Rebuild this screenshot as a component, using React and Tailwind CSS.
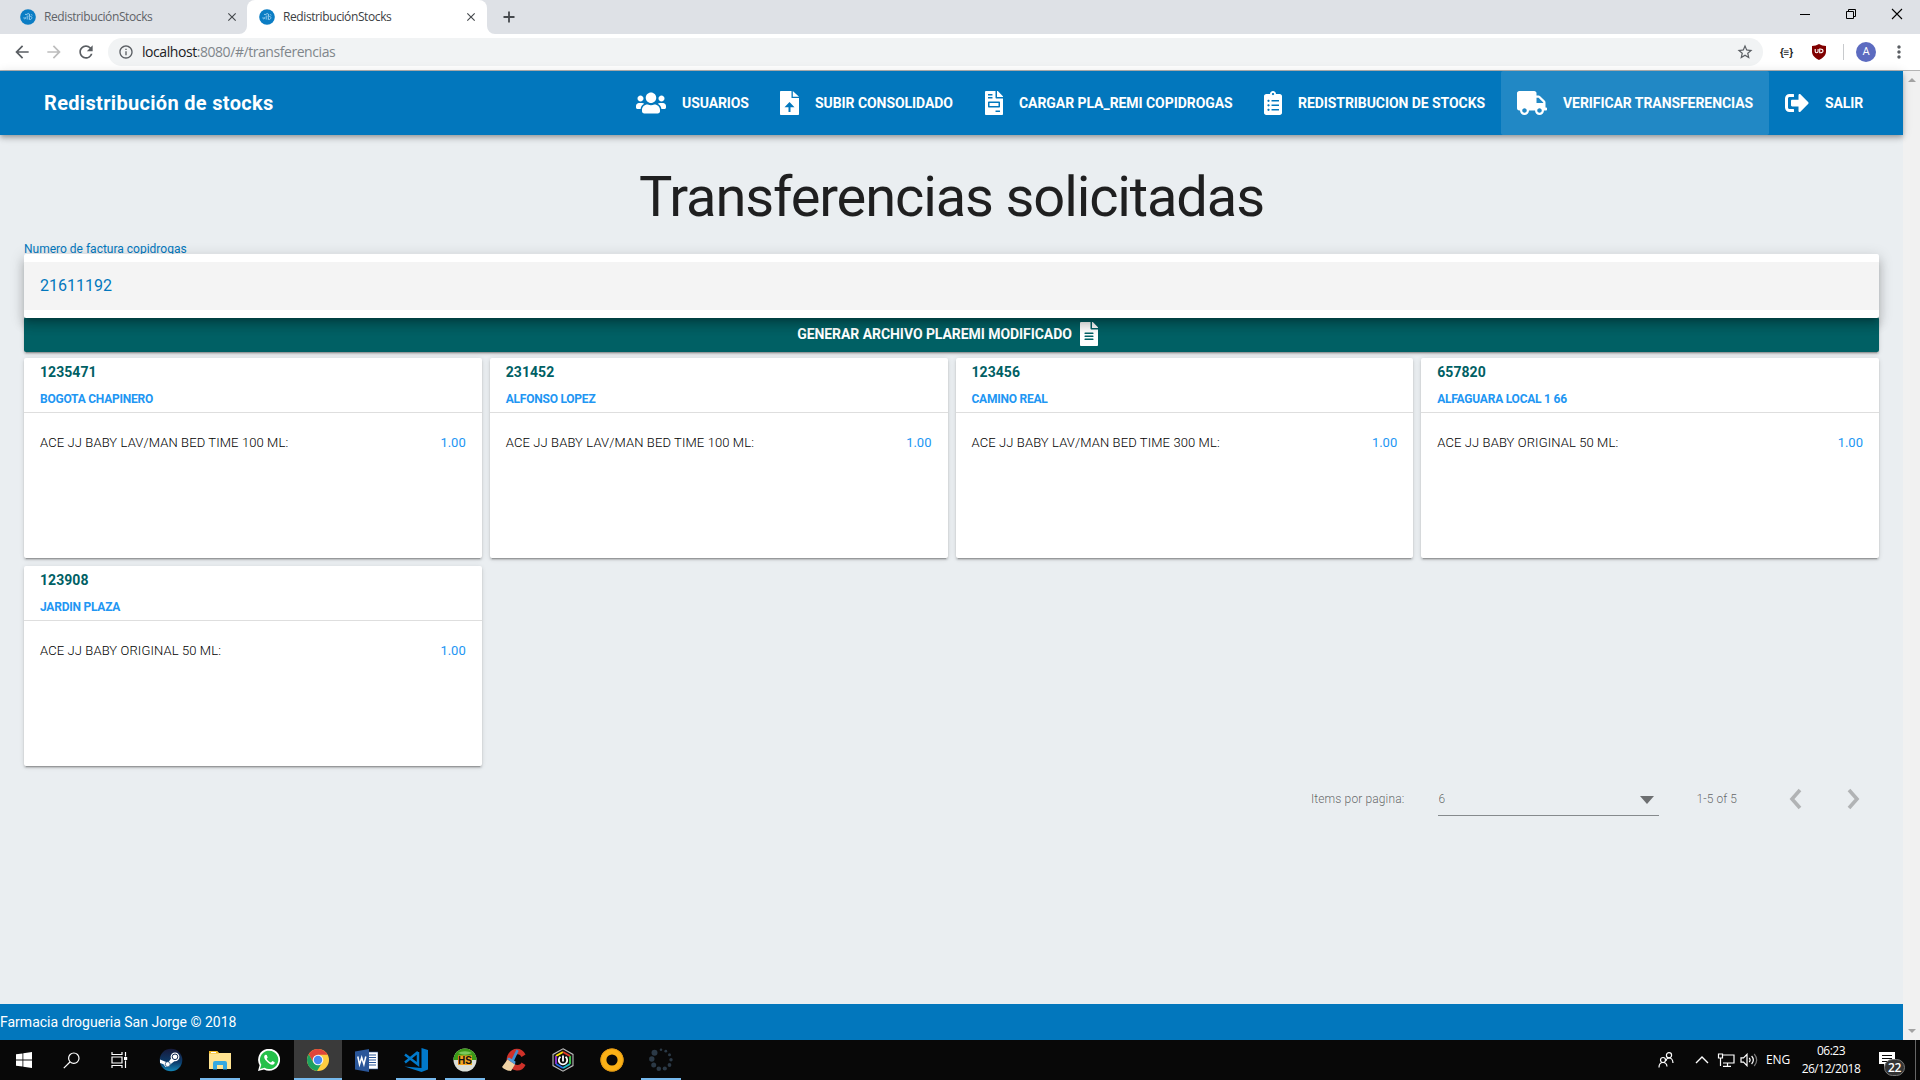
import React from "react";
import {
  FaUsers, FaFileInvoice, FaClipboardList, FaTruck, FaSignOutAlt, FaFileAlt,
} from "react-icons/fa";
import { MdArrowBack, MdArrowForward, MdRefresh, MdInfoOutline, MdStarBorder, MdMoreVert, MdClose } from "react-icons/md";

function Favicon() {
  return (
    <svg width="16" height="16" viewBox="0 0 16 16">
      <circle cx="8" cy="8" r="7.8" fill="#0b7dc4" />
      <path d="M4 8.2c0 2.5 1.6 2.6 1.7 0M5 5.4h2.5M7.2 6.5v4M7.4 4.6c2.2-.8 3 1.8 1.4 2.6M9.3 5v6M9.6 7.8c2-1.3 3 .9 1.6 2.3-.7.7-1.7.3-1.7-.6M11.2 5.6l1.2.6" fill="none" stroke="#9fd3f0" strokeWidth=".9" />
    </svg>
  );
}

function Tab({ active }) {
  return (
    <div className={active
      ? "relative flex h-[34px] w-[240px] items-center rounded-t-lg bg-white pl-3 text-[#3c4043]"
      : "flex h-[34px] w-[247px] items-center pl-5 text-[#5f6368]"}>
      <Favicon />
      <span className="ml-2 w-[181px] text-[12px] tracking-[-0.4px]">RedistribuciónStocks</span>
      <MdClose size={14} color="#45494d" />
      {active && (
        <>
          <svg className="absolute -left-2 bottom-0" width="8" height="8" viewBox="0 0 8 8"><path d="M8 0v8H0a8 8 0 0 0 8-8z" fill="#fff" /></svg>
          <svg className="absolute -right-2 bottom-0" width="8" height="8" viewBox="0 0 8 8"><path d="M0 0v8h8a8 8 0 0 1-8-8z" fill="#fff" /></svg>
        </>
      )}
    </div>
  );
}

function BrowserChrome() {
  return (
    <div className="font-['Open_Sans',sans-serif]">
      <div className="flex h-[34px] items-center bg-[#dee1e6]">
        <Tab />
        <Tab active />
        <svg className="ml-4" width="12" height="12" viewBox="0 0 12 12"><path d="M6 .5v11M.5 6h11" stroke="#45494d" strokeWidth="1.8" /></svg>
        <div className="mb-[6px] ml-auto mr-[17px] flex items-center gap-[34px]">
          <svg width="12" height="12" viewBox="0 0 12 12"><path d="M1 6.5h10" stroke="#000" /></svg>
          <svg width="12" height="12" viewBox="0 0 12 12"><path d="M1.500 3.500h7v7h-7zM3.500 3.500v-2h7v7h-2" fill="none" stroke="#000" /></svg>
          <svg width="12" height="12" viewBox="0 0 12 12"><path d="M1 1l10 10M11 1L1 11" stroke="#000" strokeWidth="1.1" /></svg>
        </div>
      </div>
      <div className="flex h-[36px] items-center bg-white text-[#5a5e63]">
        <div className="flex w-[108px] gap-3 pl-3">
          <MdArrowBack size={20} />
          <MdArrowForward size={20} color="#bdbdbd" />
          <MdRefresh size={20} />
        </div>
        <div className="flex h-[28px] w-[1655px] items-center rounded-full bg-[#f1f3f4] pl-[10px] pr-[9px]">
          <MdInfoOutline size={16} />
          <span className="-mt-px ml-2 text-[14px] tracking-[-0.44px] text-[#80868b]"><span className="text-[#202124]">localhost</span>:8080/#/transferencias</span>
          <MdStarBorder size={18} className="ml-auto" />
        </div>
        <span className="ml-[17px] w-[15px] whitespace-nowrap font-['Liberation_Sans',sans-serif] text-[10px] font-bold tracking-[-0.3px] text-[#222]">{"{≡}"}</span>
        <svg className="ml-[17px]" width="14" height="16" viewBox="0 0 14 16">
          <path d="M7 0c2 1.300 4.500 1.800 7 2v5.500c0 4-3.200 6.700-7 8.500-3.800-1.800-7-4.500-7-8.500V2c2.500-.2 5-.7 7-2z" fill="#800000" />
          <path d="M3.200 5v2.300c0 2 2.900 2 2.900 0V5M7.700 5v3.700c4.400.6 4.400-4.200 0-3.700z" fill="none" stroke="#fff" strokeWidth="1.100" />
        </svg>
        <div className="ml-[17px] h-4 w-px bg-[#c8cacd]" />
        <div className="ml-[12px] flex size-5 items-center justify-center rounded-full bg-[#5c6bc0] font-['Roboto',sans-serif] text-[11px] text-white">A</div>
        <MdMoreVert size={20} className="ml-[13px]" />
      </div>
      <div className="h-px bg-[#b4b4b4]" />
    </div>
  );
}

function FileUpload() {
  return (
    <svg width="19" height="24" viewBox="0 0 19 24" fill="#fff">
      <path fillRule="evenodd" d="M0 .8Q0 0 .8 0H11.500v7H19v16.200q0 .8-.8.800H.8q-.8 0-.8-.8zM9.500 11L4.500 16.200h4V21h2v-4.800h4z" />
      <path d="M12.800 0L19 5.800h-6.200z" />
    </svg>
  );
}

const NAV = [
  { label: "USUARIOS", icon: <FaUsers size={30} />, cls: "w-[144px] tracking-[-0.1px]", iconCls: "w-[30px]" },
  { label: "SUBIR CONSOLIDADO", icon: <FileUpload />, cls: "w-[204px] tracking-[-0.07px]", iconCls: "w-[19px]" },
  { label: "CARGAR PLA_REMI COPIDROGAS", icon: <FaFileInvoice size={24} className="-mx-[3px] shrink-0" />, cls: "w-[279px] tracking-[-0.06px]", iconCls: "w-[19px]" },
  { label: "REDISTRIBUCION DE STOCKS", icon: <FaClipboardList size={24} className="-mx-[3px] shrink-0" />, cls: "w-[254px] tracking-[-0.07px]", iconCls: "w-[19px]" },
  { label: "VERIFICAR TRANSFERENCIAS", icon: <FaTruck size={30} />, cls: "w-[268px] bg-white/[.125] tracking-[-0.07px]", iconCls: "w-[30px]" },
  { label: "SALIR", icon: <FaSignOutAlt size={24} />, cls: "w-[110px] tracking-[-0.1px]", iconCls: "w-[24px]" },
];

function Header() {
  return (
    <header className="relative flex h-16 items-center bg-[#0277bd] pl-11 pr-6 text-white shadow-[0_2px_4px_-1px_rgba(0,0,0,.2),0_4px_5px_0_rgba(0,0,0,.14),0_1px_10px_0_rgba(0,0,0,.12)]">
      <h1 className="mr-auto text-[20px] font-bold tracking-[0.32px]">Redistribución de stocks</h1>
      <nav className="flex h-full">
        {NAV.map((n) => (
          <a key={n.label} className={"flex h-full items-center whitespace-nowrap rounded-[2px] pl-4 text-[14px] font-bold " + n.cls}>
            <span className={"mr-4 flex shrink-0 items-center justify-center " + n.iconCls}>{n.icon}</span>
            {n.label}
          </a>
        ))}
      </nav>
    </header>
  );
}

const CARDS = [
  ["1235471", "BOGOTA CHAPINERO", "ACE JJ BABY LAV/MAN BED TIME 100 ML:"],
  ["231452", "ALFONSO LOPEZ", "ACE JJ BABY LAV/MAN BED TIME 100 ML:"],
  ["123456", "CAMINO REAL", "ACE JJ BABY LAV/MAN BED TIME 300 ML:"],
  ["657820", "ALFAGUARA LOCAL 1 66", "ACE JJ BABY ORIGINAL 50 ML:"],
  ["123908", "JARDIN PLAZA", "ACE JJ BABY ORIGINAL 50 ML:"],
];

function Card({ data }) {
  return (
    <div className="h-[200px] rounded-[2px] bg-white shadow-[0_3px_1px_-2px_rgba(0,0,0,.2),0_2px_2px_0_rgba(0,0,0,.14),0_1px_5px_0_rgba(0,0,0,.12)]">
      <div className="h-[55px] border-b border-[#dedede] px-4 pt-1">
        <div className="text-[14px] font-bold leading-5 tracking-[0.05px] text-[#006064]">{data[0]}</div>
        <div className="mt-[7px] text-[12px] font-bold leading-5 tracking-[-0.23px] text-[#2196f3]">{data[1]}</div>
      </div>
      <div className="flex h-[60px] items-center justify-between px-4 text-[13px]">
        <span className="font-light tracking-[0.11px] text-black">{data[2]}</span>
        <span className="text-[#2196f3]">{"1.00"}</span>
      </div>
    </div>
  );
}

function Page() {
  return (
    <div className="flex w-[1903px] flex-col bg-[#eaeef1] font-['Roboto',sans-serif]">
      <Header />
      <main className="flex grow flex-col px-6">
        <h2 className="mt-[34px] text-center text-[56px] leading-[56px] tracking-[-1.12px] text-black/[.87]">Transferencias solicitadas</h2>
        <div className="mt-[15px] h-[14px] text-[12px] leading-[18px] text-[#0277bd]">Numero de factura copidrogas</div>
        <div className="relative z-10 h-16 rounded-[2px] bg-white py-2 shadow-[0_5px_5px_-3px_rgba(0,0,0,.2),0_8px_10px_1px_rgba(0,0,0,.14),0_3px_14px_2px_rgba(0,0,0,.12)]">
          <div className="flex h-12 items-center bg-[#f4f4f4] px-4 text-[16px] text-[#0277bd]">21611192</div>
        </div>
        <button className="-mt-px flex h-[35px] items-center justify-center rounded-[2px] bg-[#006064] pr-[5px] pb-[1px] text-[14px] font-bold tracking-[-0.06px] text-white shadow-[0_3px_1px_-2px_rgba(0,0,0,.2),0_2px_2px_0_rgba(0,0,0,.14),0_1px_5px_0_rgba(0,0,0,.12)]">
          GENERAR ARCHIVO PLAREMI MODIFICADO
          <FaFileAlt size={24} className="ml-[5px]" />
        </button>
        <section className="mt-[6px] grid grid-cols-4 gap-2">
          {CARDS.map((c) => <Card key={c[0]} data={c} />)}
        </section>
        <div className="mt-[15px] flex h-[36px] items-center text-[12px] font-light text-black/60">
          <span className="ml-auto tracking-[0.13px]">Items por pagina:</span>
          <div className="relative ml-[34px] mr-[37px] flex h-[34px] w-[221px] items-center justify-between border-b border-[#868a8d] pr-[5px] pt-px">
            <span>6</span>
            <svg className="mt-px" width="14" height="8" viewBox="0 0 14 8"><path d="M0 0h14L7 8z" fill="#6d6f71" /></svg>
          </div>
          <span className="tracking-[0.08px]">1-5 of 5</span>
          <svg className="ml-[51px]" width="14" height="22" viewBox="0 0 14 22"><path d="M12 2L4 11l8 9" fill="none" stroke="#b1b3b5" strokeWidth="3.600" /></svg>
          <svg className="ml-[45px] mr-[18px]" width="14" height="22" viewBox="0 0 14 22"><path d="M2 2l8 9-8 9" fill="none" stroke="#b1b3b5" strokeWidth="3.600" /></svg>
        </div>
      </main>
      <footer className="flex h-9 items-center bg-[#0277bd] text-[14px] text-white">Farmacia drogueria San Jorge © 2018</footer>
    </div>
  );
}

function Scrollbar() {
  return (
    <div className="flex w-[17px] flex-col items-center justify-between bg-[#f1f1f1] py-[6px]">
      <svg width="8" height="6" viewBox="0 0 8 6"><path d="M0 5l4-4 4 4z" fill="#a3a3a3" /></svg>
      <svg width="8" height="6" viewBox="0 0 8 6"><path d="M0 1l4 4 4-4z" fill="#a3a3a3" /></svg>
    </div>
  );
}

const line = { fill: "none", stroke: "#fff", strokeWidth: 1.2 };

const START = [
  <svg width="16" height="16" viewBox="0 0 16 16" fill="#fff"><path d="M0 2.300L6.500 1.400v6.200H0zM7.300 1.300L16 0v7.600H7.300zM0 8.400h6.500v6.200L0 13.700zM7.300 8.400H16V16l-8.700-1.300z" /></svg>,
  <svg className="-ml-px" width="17" height="17" viewBox="0 0 17 17" {...line}><circle cx="10.800" cy="6.200" r="5.200" /><path d="M7 10L.8 16.200" /></svg>,
  <svg className="-ml-px" width="17" height="16" viewBox="0 0 17 16" {...line}><path d="M1 0v2.500h10V0M1 16v-2.500h10V16M1 5h10v6H1zM14.500 0v4.500M14.500 8.500V16" /><path d="M13 5h3.200v3H13z" fill="#fff" stroke="none" /></svg>,
];

const APPS = [
  { icon: (
    <svg width="24" height="24" viewBox="0 0 24 24">
      <defs><linearGradient id="steam" x1="0" y1="0" x2="0" y2="1"><stop offset="0" stopColor="#171a3b" /><stop offset=".6" stopColor="#0c3c6b" /><stop offset="1" stopColor="#1387b8" /></linearGradient></defs>
      <circle cx="12" cy="12" r="11.300" fill="url(#steam)" />
      <path d="M1 11.500l8 3.300 4-5.500L17 12l-5.500 4.200-2 2.600-3 .2-2-2.700L1 15z" fill="#fff" />
      <circle cx="16" cy="8.800" r="4.400" fill="#fff" /><circle cx="16" cy="8.800" r="2.800" fill="none" stroke="#10284f" strokeWidth="1" />
      <circle cx="8.700" cy="16.200" r="2.500" fill="#fff" stroke="#10416f" strokeWidth=".7" />
    </svg>) },
  { bar: "w-10", icon: (
    <svg width="22" height="19" viewBox="0 0 22 19">
      <path d="M0 0h8l2 2h12v16H0z" fill="#ffe391" /><path d="M0 0h8l2 2.500H0z" fill="#f5b921" /><path d="M2 1h5v1H2z" fill="#fff" />
      <path d="M4 18.500V12q0-2 2-2h10q2 0 2 2v6.500h-4V14H8v4.500z" fill="#35a9e1" />
    </svg>) },
  { icon: (
    <svg width="22" height="22" viewBox="0 0 22 22">
      <path d="M0 22l1.600-5.700A11 11 0 1 1 6 20.500z" fill="#fff" />
      <path d="M2 20l1.300-4.300A9.200 9.200 0 1 1 6.500 18.800z" fill="#25c04a" />
      <path d="M7.700 5.800c-2 .7-2.100 3 .4 6 2.600 3.200 6.200 5 8 3.200.8-1 .7-1.700.3-2l-2-1-1.400 1.500c-1.800-.4-3.500-2-4.300-3.700l1-1.300-1-2.500z" fill="#fff" />
    </svg>) },
  { active: true, bar: "w-12", icon: (
    <svg width="22" height="22" viewBox="0 0 22 22">
      <circle cx="11" cy="11" r="11" fill="#ffcd40" />
      <path d="M11 5.800h9.700A11 11 0 0 0 1.700 5.200L6.500 13.500z" fill="#e0453a" />
      <path d="M1.700 5.200A11 11 0 0 0 10 22l5.200-8.500L11 16l-4.500-2.500z" fill="#1da15f" />
      <circle cx="11" cy="11" r="5.300" fill="#f4f4f4" /><circle cx="11" cy="11" r="4.200" fill="#4688f1" />
    </svg>) },
  { icon: (
    <svg className="-ml-px" width="23" height="23" viewBox="0 0 23 23">
      <path d="M13 3h10v17H13z" fill="#fff" stroke="#2a5699" strokeWidth=".6" /><path d="M14 6h7M14 8.500h7M14 11h7M14 13.500h7M14 16h7" stroke="#2a5699" strokeWidth="1.100" />
      <path d="M0 2.500L14 0v23L0 20.500z" fill="#2a5699" />
      <path d="M2.800 7.500l1.700 8 2.200-7 2.200 7 1.900-8" fill="none" stroke="#fff" strokeWidth="1.500" />
    </svg>) },
  { bar: "w-10", icon: (
    <svg width="24" height="24" viewBox="0 0 24 24">
      <path d="M17.500 0L24 2v19.500L17.500 24 .5 18.500l17 1.500z" fill="#0179cb" />
      <path d="M14 4v12.500L1 6.500M1 14.500L14 4" fill="none" stroke="#0179cb" strokeWidth="2.500" />
    </svg>) },
  { bar: "w-10", icon: (
    <svg className="-ml-px" width="24" height="24" viewBox="0 0 24 24">
      <circle cx="12" cy="12" r="11.500" fill="#dcdfd8" /><path d="M.5 12a11.500 11.500 0 0 1 23 0z" fill="#3b9a18" />
      <path d="M5 5a9 5 0 0 1 14 0 12 8 0 0 1-14 0z" fill="#7cc95b" />
      <path d="M5 7.500h14v9.500H5z" fill="#f6a51f" />
      <text x="12" y="15.900" textAnchor="middle" fontSize="10" fontWeight="700" fontFamily="Liberation Sans" fill="#111">HS</text>
    </svg>) },
  { icon: (
    <svg width="24" height="24" viewBox="0 0 24 24">
      <path d="M23.500 6.500l-4 2.500q-1.500-3.500-5-2.500c-5 1.500-4.500 10 .5 10.500 2.500.2 3.800-1 4.500-2.500l4 2.500c-2 4-5 6-9 5.500C5.500 21 3 14 5.500 7.500 9-1 20-1.500 23.500 6.500z" fill="#cf3129" />
      <path d="M14.500 1.500l2.200 1.200-5 10.800-2.500-1.200z" fill="#3c8dd0" />
      <path d="M5.500 11.500l7.500 5-4 6.500q-6-.5-9-4z" fill="#f0d3a4" /><path d="M5 11l2-1.500 6.500 4-.5 3z" fill="#4d9bdb" />
    </svg>) },
  { icon: (
    <svg width="24" height="24" viewBox="0 0 24 24" fill="none">
      <path d="M12 .8l10 5.600v11.200l-10 5.600-10-5.600V6.400z" stroke="#bbb" strokeWidth="1.100" fill="#111" />
      <path d="M12 4L5 8" stroke="#fde000" strokeWidth="2" /><path d="M5 8v8" stroke="#8532c8" strokeWidth="2" /><path d="M5 16l7 4" stroke="#2468e8" strokeWidth="2" />
      <path d="M12 20l7-4" stroke="#20bcc9" strokeWidth="2" /><path d="M19 16V8" stroke="#38c248" strokeWidth="2" /><path d="M19 8l-7-4" stroke="#e23a25" strokeWidth="2" />
      <circle cx="12" cy="12" r="5.300" fill="#080808" /><path d="M9.500 8.800a4.200 4.200 0 1 0 5 0M12 7.500v6" stroke="#fff" strokeWidth="1.800" />
    </svg>) },
  { icon: (
    <svg width="24" height="24" viewBox="0 0 24 24"><circle cx="12" cy="12" r="8.600" fill="none" stroke="#fbb116" strokeWidth="6" /><circle cx="12" cy="12" r="11.200" fill="none" stroke="#dc9214" strokeWidth=".8" /></svg>) },
  { bar: "w-10", icon: (
    <svg width="24" height="24" viewBox="0 0 24 24" fill="#2b3946">
      <circle cx="5.500" cy="4.700" r="3" /><circle cx="2.800" cy="11" r="2.700" /><circle cx="4.700" cy="17" r="2.500" /><circle cx="9.800" cy="20.800" r="2.300" />
      <circle cx="15.800" cy="20.500" r="2.100" /><circle cx="20.500" cy="17" r="1.900" /><circle cx="22" cy="11.800" r="1.700" /><circle cx="20.500" cy="6.800" r="1.500" /><circle cx="16.800" cy="3.200" r="1.400" /><circle cx="12" cy="1.800" r="1.300" />
    </svg>) },
];

function Taskbar() {
  return (
    <div className="flex h-10 bg-[#080808] font-['Open_Sans',sans-serif] text-[12px] text-white">
      {START.map((icon, i) => <div key={i} className="flex w-12 items-center justify-center">{icon}</div>)}
      <div className="ml-[3px] flex gap-px">
        {APPS.map((a, i) => (
          <div key={i} className={"relative flex w-12 items-center justify-center " + (a.active ? "bg-[#3a3a3a]" : "")}>
            {a.icon}
            {a.bar && <div className={"absolute bottom-0 left-1/2 h-[2px] -translate-x-1/2 bg-[#76b9ed] " + a.bar} />}
          </div>
        ))}
      </div>
      <div className="ml-auto flex items-center">
        <svg width="16" height="16" viewBox="0 0 16 16" {...line}><circle cx="5" cy="8" r="2.500" /><path d="M1 15.500c0-3.300 1.500-5 4-5s3.800 1.700 4 4" /><circle cx="11" cy="3.300" r="2.600" /><path d="M8 9c.3-2 1.500-3 3-3 2.300 0 3.800 1.500 4 5" /></svg>
        <svg className="ml-[21px]" width="14" height="8" viewBox="0 0 14 8" {...line} strokeWidth="1.400"><path d="M1 7l6-6 6 6" /></svg>
        <svg className="ml-[8px]" width="18" height="14" viewBox="0 0 18 14" {...line}><path d="M6 2h11v8H6M3.500 5.500v7.500M10.500 10v3M6 13.300h8M1.500 1h4v4h-4z" /></svg>
        <svg className="ml-[5px]" width="18" height="14" viewBox="0 0 18 14" {...line}><path d="M1 4.800h2.500L7 1.300v11.400L3.500 9.200H1zM9.200 4.800q1.800 2.200 0 4.400M11.600 3q3.500 4 0 8" /><path d="M14.200 1q5 6 0 12" stroke="#777" /></svg>
        <span className="ml-[8px] w-[24px] tracking-[-0.1px]">ENG</span>
        <div className="ml-[10px] w-[62px] whitespace-nowrap text-center leading-[18px] tracking-[-0.5px]"><div>06:23</div><div>26/12/2018</div></div>
        <div className="relative ml-[17px] h-[40px] w-[36px]">
          <svg className="absolute left-0 top-[12px]" width="16" height="16" viewBox="0 0 16 16"><path d="M0 0h16v12H9l-4 4v-4H0z" fill="#fff" /><path d="M3 3.500h10M3 6.500h10M3 9.500h6" stroke="#080808" /></svg>
          <div className="absolute left-[5px] top-[19px] flex h-[17px] w-[21px] items-center justify-center rounded-full border border-[#777] bg-[#343434] text-[12px] font-semibold tracking-[-0.3px]">22</div>
        </div>
        <div className="h-full w-px bg-[#666]" />
        <div className="w-1" />
      </div>
    </div>
  );
}

export default function App() {
  return (
    <div className="flex h-[1080px] w-[1920px] flex-col overflow-hidden">
      <BrowserChrome />
      <div className="flex grow">
        <Page />
        <Scrollbar />
      </div>
      <Taskbar />
    </div>
  );
}
